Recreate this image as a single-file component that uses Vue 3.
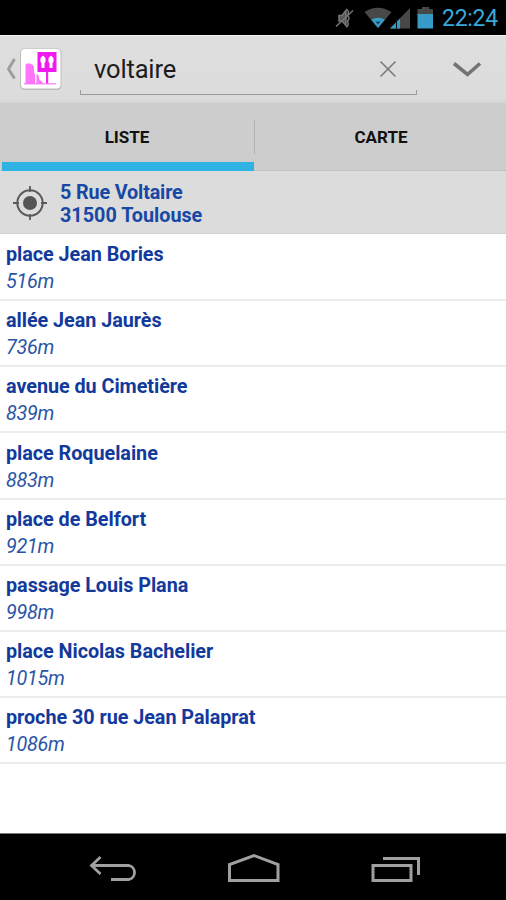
<script setup>
const places = [
  { name: 'place Jean Bories', distance: '516m' },
  { name: 'allée Jean Jaurès', distance: '736m' },
  { name: 'avenue du Cimetière', distance: '839m' },
  { name: 'place Roquelaine', distance: '883m' },
  { name: 'place de Belfort', distance: '921m' },
  { name: 'passage Louis Plana', distance: '998m' },
  { name: 'place Nicolas Bachelier', distance: '1015m' },
  { name: 'proche 30 rue Jean Palaprat', distance: '1086m' }
]
</script>

<template>
  <div class="screen">
    <header class="status">
      <svg class="status-icons" width="104" height="36" viewBox="0 0 104 36">
        <!-- muted speaker -->
        <g fill="none" stroke="#777" stroke-width="1.5">
          <path d="M4 15.500h3l4-5v15l-4-4.500H4z" fill="#555" />
          <path d="M11 9.500q4 1 1.500 6 3 2.500 0 5.500 2 5-1.500 6M1 26.500L18 10.500" />
        </g>
        <!-- wifi -->
        <path d="M29.500 12q13-8.500 27 0L43 28z" fill="#484848" />
        <path d="M36 19.500q7-3.500 14 0l-7 8.500z" fill="#369bc6" />
        <path d="M40.500 21.500h5l-2.500 3z" fill="#17445a" />
        <!-- signal -->
        <path d="M75 8v20.500H55z" fill="#484848" />
        <path d="M65 18.500v10H55z" fill="#369bc6" />
        <path d="M61.500 18v10.500" stroke="#111" stroke-width="1" />
        <!-- battery -->
        <path d="M82.500 9h4.500V7h7v2h4v6H82.500z" fill="#484848" />
        <path d="M82.500 14H98v14.500H82.500z" fill="#369bc6" />
      </svg>
      <span class="clock">22:24</span>
    </header>

    <div class="actionbar">
      <svg class="up" width="12" height="24" viewBox="0 0 12 24">
        <path d="M10.500 2L4.500 12l6 9.500" fill="none" stroke="#9b9b9b" stroke-width="2.800" />
      </svg>
      <svg class="logo" width="44" height="44" viewBox="0 0 44 44">
        <rect x="1" y="1.500" width="41.500" height="41.500" rx="4.500" fill="#bdbdbd" />
        <rect x="2" y="2" width="39.500" height="39.500" rx="4" fill="#fff" />
        <path d="M6.500 37V18q0-1.500 2-1.500h2.500q4 1 4 5v5h1v10.500zM17.500 37V27l2 1 1 5 3 2v2z" fill="#ff76fb" />
        <rect x="18.500" y="5" width="19" height="20" fill="#f01af0" />
        <path d="M27 25h2.200v12H27z" fill="#f22af0" />
        <path d="M5 36.800h32" stroke="#ff76fb" stroke-width="1.200" />
        <path d="M21.500 11l2.500-2.500L26.500 11v4l-1 1v5h-3v-5l-1-1zM29.500 11l2.500-2.500 2.500 2.500v4l-1 1v5h-3v-5l-1-1z" fill="#fff" />
      </svg>
      <div class="search">
        <span class="query">voltaire</span>
        <svg class="clear" width="18" height="18" viewBox="0 0 18 18">
          <path d="M1.500 1.500l15 15M16.500 1.500l-15 15" stroke="#777" stroke-width="1.500" />
        </svg>
      </div>
      <svg class="chevron" width="30" height="18" viewBox="0 0 30 18">
        <path d="M2 3.500L15.500 14.500l12.500-11" fill="none" stroke="#747474" stroke-width="3.600" />
      </svg>
    </div>

    <nav class="tabs">
      <div class="tab active"><span>LISTE</span></div>
      <div class="tab second"><span>CARTE</span></div>
    </nav>

    <section class="address">
      <svg width="36" height="36" viewBox="0 0 36 36">
        <circle cx="18" cy="18" r="12.700" fill="none" stroke="#5a5a5a" stroke-width="2" />
        <circle cx="18" cy="18" r="7" fill="#555" />
        <path d="M18 1v6M18 29v6M1 18h6M29 18h6" stroke="#5a5a5a" stroke-width="1.800" />
      </svg>
      <div class="address-text">
        <div class="street">5 Rue Voltaire</div>
        <div>31500 Toulouse</div>
      </div>
    </section>

    <main class="list">
      <div v-for="place in places" :key="place.name" class="row">
        <div class="name">{{ place.name }}</div>
        <div class="distance">{{ place.distance }}</div>
      </div>
    </main>

    <footer class="navbar">
      <svg width="50" height="34" viewBox="0 0 50 34">
        <path d="M2.500 14.500H40a7.200 7.200 0 0 1 0 14H22M11.500 6L2.500 14.500l9 8.500" fill="none" stroke="#a0a0a0" stroke-width="2.800" />
      </svg>
      <svg width="54" height="34" viewBox="0 0 54 34">
        <path d="M1.500 29.500V13.500L26 4.500l24 9v16z" fill="none" stroke="#a0a0a0" stroke-width="3" />
      </svg>
      <svg width="50" height="34" viewBox="0 0 50 34">
        <path d="M2 14.500h38v15H2zM12 7.500h35.500V24" fill="none" stroke="#a0a0a0" stroke-width="3" />
      </svg>
    </footer>
  </div>
</template>

<style>
body {
  margin: 0;
  background: #fff;
}
</style>

<style scoped>
.screen {
  display: flex;
  flex-direction: column;
  width: 506px;
  height: 900px;
  overflow: hidden;
  background: #fff;
  font-family: Roboto, sans-serif;
}
.status {
  display: flex;
  align-items: center;
  justify-content: flex-end;
  flex: none;
  height: 35px;
  padding-right: 8px;
  background: #000;
}
.status-icons {
  flex: none;
}
.clock {
  width: 56px;
  margin-left: 3px;
  color: #37a9da;
  font-size: 23px;
  line-height: 36px;
  padding-top: 2px;
  letter-spacing: -0.3px;
  white-space: nowrap;
}
.actionbar {
  display: flex;
  align-items: center;
  flex: none;
  box-sizing: border-box;
  height: 68px;
  border-top: 1px solid #f2f2f2;
  border-bottom: 1px solid #d4d4d4;
  background: linear-gradient(#dedede 0%, #dcdcdc 94%, #d6d6d6 100%);
}
.up {
  flex: none;
  margin-left: 4px;
}
.logo {
  flex: none;
  margin-left: 3px;
}
.search {
  display: flex;
  align-items: center;
  justify-content: space-between;
  flex: none;
  box-sizing: border-box;
  position: relative;
  width: 337px;
  height: 54px;
  margin-left: 17px;
  padding: 0 20px 0 14px;
}
.search::after {
  content: '';
  position: absolute;
  left: 0;
  right: 0;
  bottom: 1px;
  height: 4px;
  border: solid #9c9c9c;
  border-width: 0 1px 1px;
}
.query {
  color: #1c1c1c;
  font-size: 25.500px;
  line-height: 34px;
  letter-spacing: -0.15px;
}
.clear,
.query {
  margin-bottom: 1px;
}
.chevron {
  flex: none;
  margin-left: 35px;
}
.tabs {
  display: flex;
  flex: none;
  box-sizing: border-box;
  height: 68px;
  border-bottom: 1px solid #c2c2c2;
  background: #cdcdcd;
}
.tab {
  display: flex;
  align-items: center;
  justify-content: center;
  flex: 0 0 254px;
  box-sizing: border-box;
  position: relative;
  color: #111;
  font-size: 17px;
  font-weight: 700;
}
.tab.second {
  flex: 1;
  padding-left: 2px;
}
.tab.active::before {
  content: '';
  position: absolute;
  left: 2px;
  right: 0;
  bottom: -1px;
  height: 9px;
  background: #2fb2e4;
}
.tab.active::after {
  content: '';
  position: absolute;
  right: -1px;
  top: 17px;
  width: 1px;
  height: 34px;
  background: #b2b2b2;
}
.address {
  display: flex;
  align-items: center;
  flex: none;
  box-sizing: border-box;
  height: 63px;
  padding: 2px 0 0 12px;
  gap: 12px;
  border-bottom: 1px solid #d0d0d0;
  background: #dcdcdc;
}
.address-text {
  padding-top: 2px;
  color: #1748a4;
  font-size: 19.800px;
  font-weight: 700;
  line-height: 23px;
}
.street {
  letter-spacing: -0.15px;
}
.list {
  flex: 1;
  background: #fff;
}
.row {
  box-sizing: border-box;
  height: 66.125px;
  padding: 7.200px 6px 0;
}
.row::after {
  content: '';
  display: block;
  height: 2px;
  margin: 4px -6px 0;
  background: #ececee;
}
.name {
  color: #123a9c;
  font-size: 19.800px;
  font-weight: 700;
  line-height: 27px;
  letter-spacing: -0.04px;
}
.distance {
  color: #2a55a6;
  font-size: 19.800px;
  font-style: italic;
  line-height: 27px;
  letter-spacing: -0.25px;
}
.navbar {
  display: flex;
  align-items: center;
  justify-content: space-between;
  flex: none;
  box-sizing: border-box;
  height: 67px;
  padding: 2px 85px 0 89px;
  border-top: 1px solid #777;
  background: #000;
}
</style>
